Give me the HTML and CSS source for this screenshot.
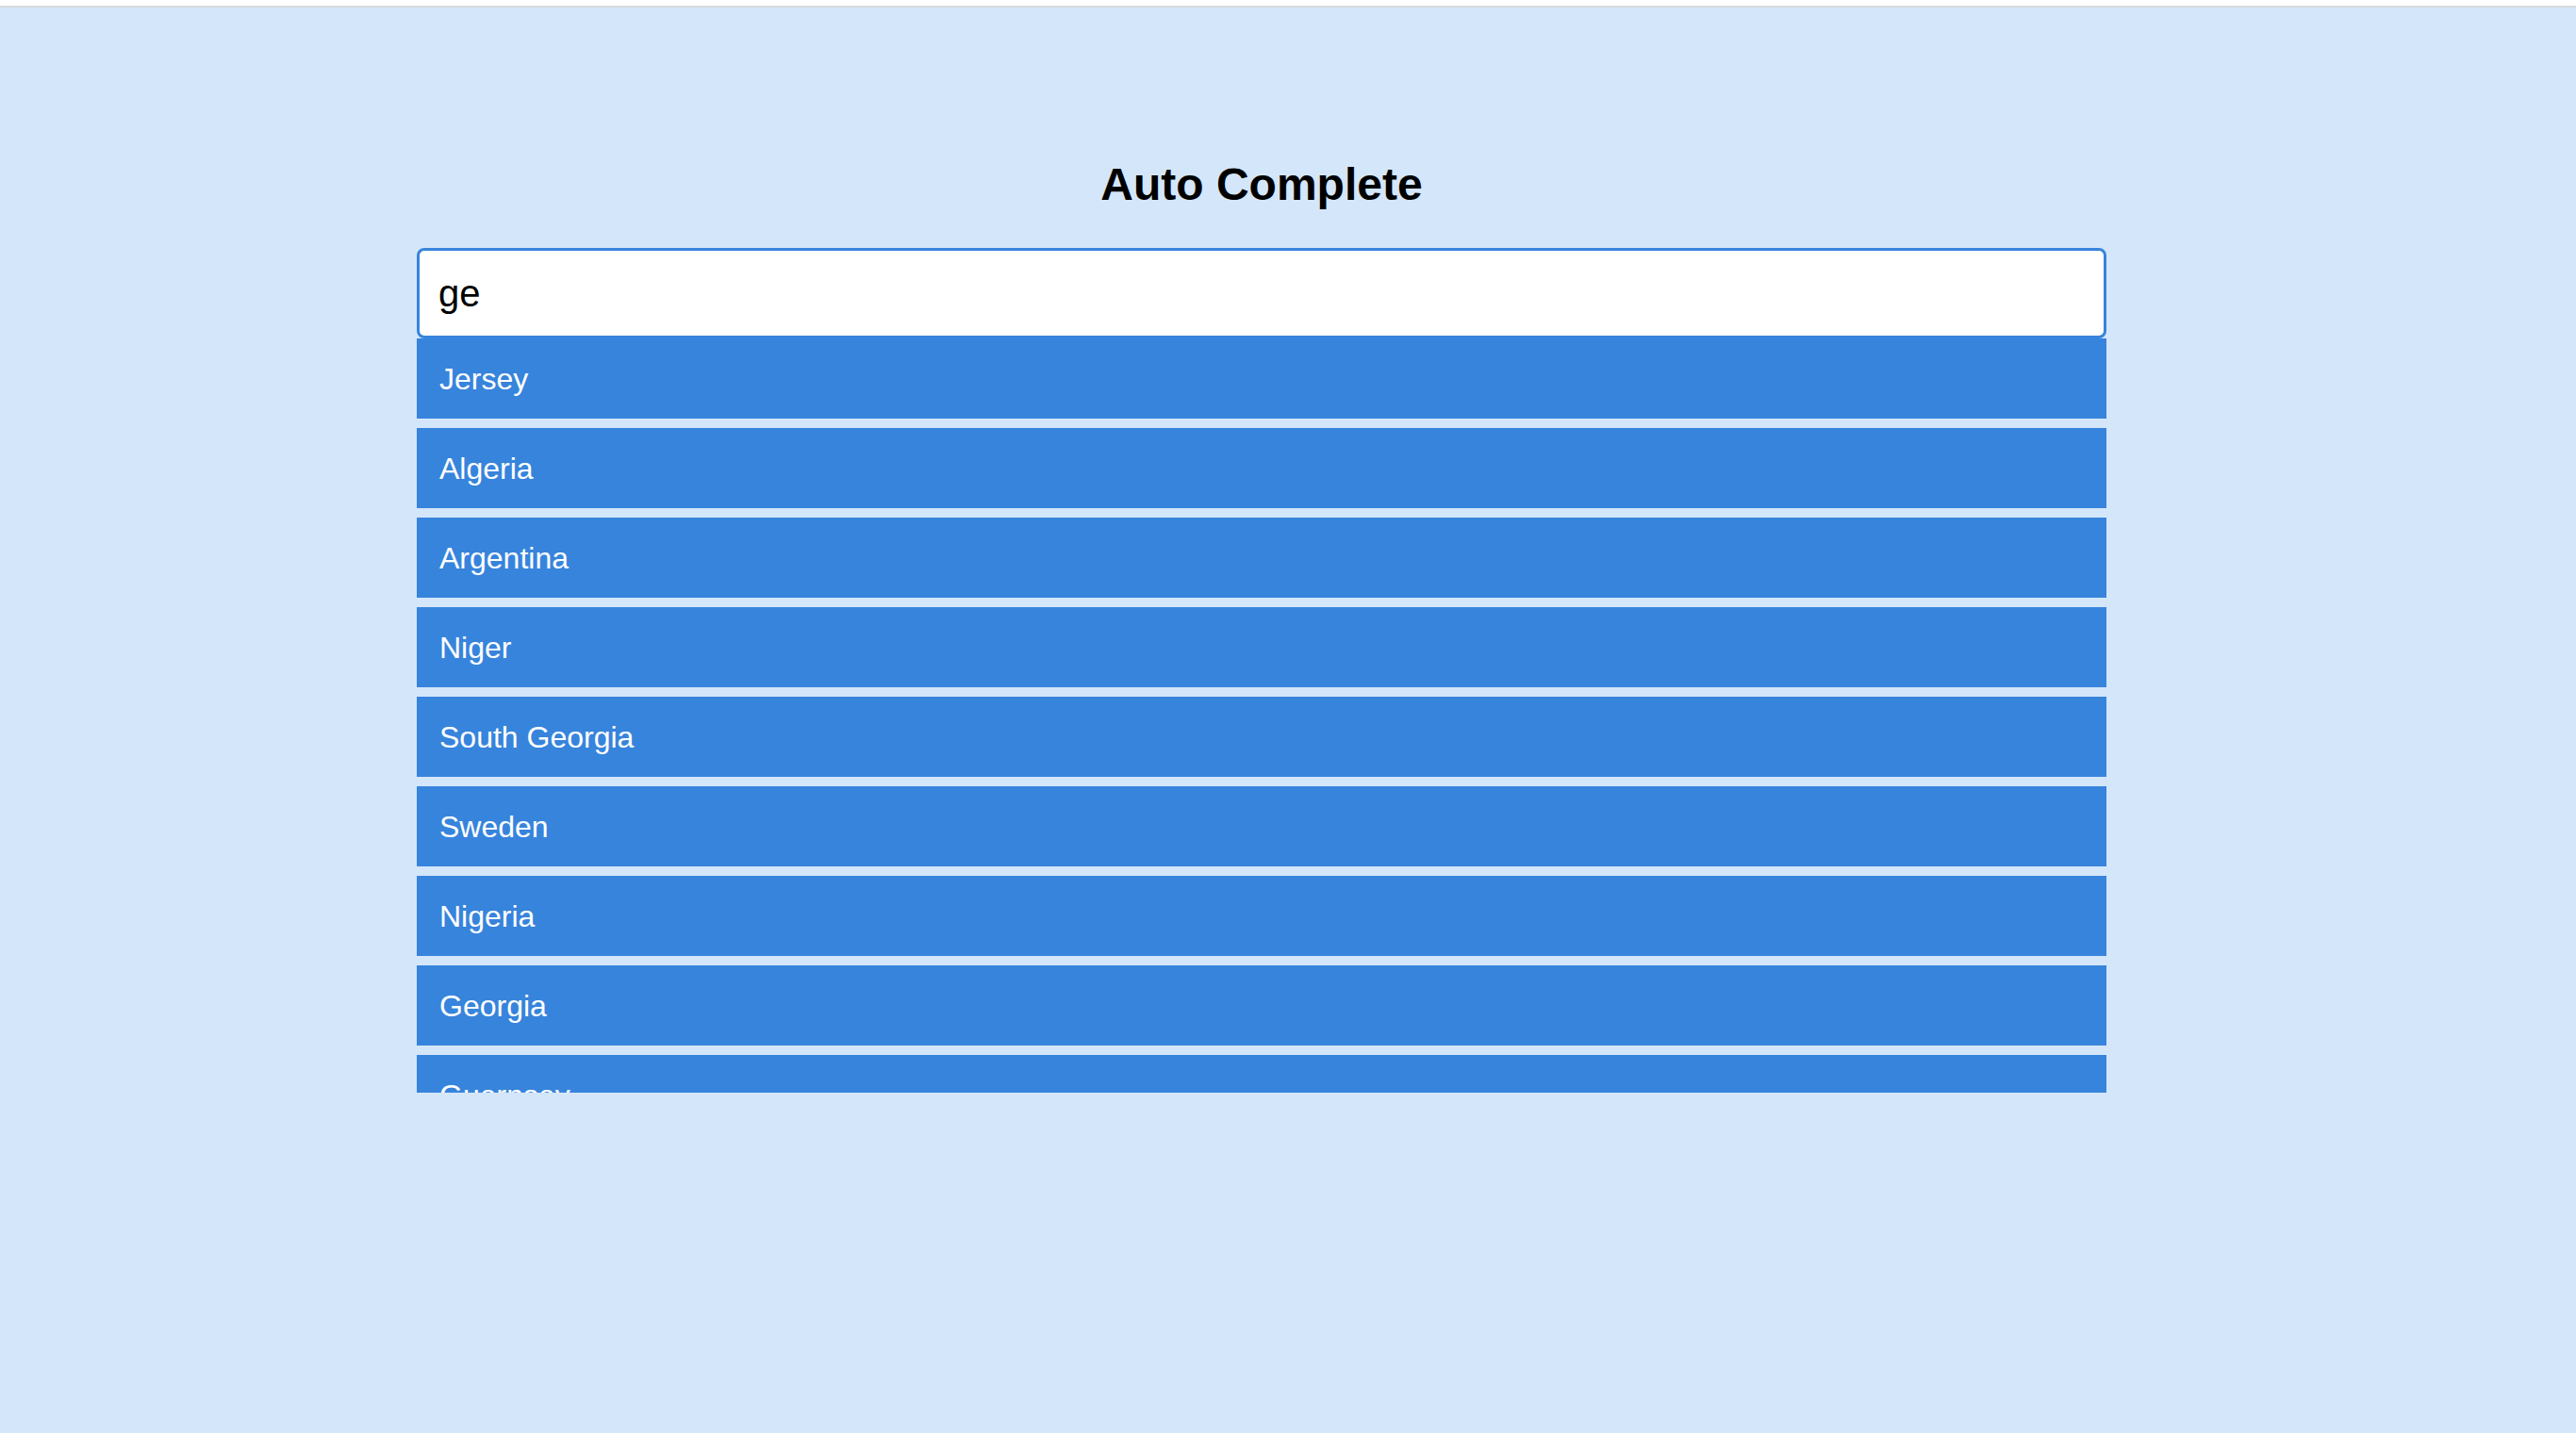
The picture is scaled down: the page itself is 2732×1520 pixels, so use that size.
FILE: index.html
```html
<!DOCTYPE html>
<html lang="en">
<head>
<meta charset="utf-8">
<title>Auto Complete</title>
<link rel="stylesheet" href="styles.css">
</head>
<body>
<div class="topbar"></div>
<main class="app">
  <h1 class="title">Auto Complete</h1>
  <div class="search">
    <input class="search-input" type="text" value="ge">
    <ul class="suggestions">
      <li class="suggestion">Jersey</li>
      <li class="suggestion">Algeria</li>
      <li class="suggestion">Argentina</li>
      <li class="suggestion">Niger</li>
      <li class="suggestion">South Georgia</li>
      <li class="suggestion">Sweden</li>
      <li class="suggestion">Nigeria</li>
      <li class="suggestion">Georgia</li>
      <li class="suggestion">Guernsey</li>
    </ul>
  </div>
</main>
</body>
</html>
```
FILE: styles.css
```css
html, body {
  margin: 0;
  padding: 0;
}
body {
  background: #d4e6fa;
  min-height: 1520px;
  font-family: "Liberation Sans", Arial, Helvetica, sans-serif;
}
.topbar {
  height: 6px;
  background: #ffffff;
  border-bottom: 2px solid #d9d9d9;
}
.app {
  width: 1792px;
  margin: 0 auto;
  position: relative;
  left: -28px;
  padding-top: 160px;
}
.title {
  margin: 0 0 40px;
  text-align: center;
  font-size: 48px;
  line-height: 1.15;
  font-weight: 700;
  color: #000;
}
.search {
  display: flex;
  flex-direction: column;
}
.search-input {
  box-sizing: border-box;
  width: 100%;
  height: 96px;
  border: 3px solid #3784dc;
  border-radius: 8px;
  background: #fff;
  padding: 0 20px;
  font-family: "Liberation Sans", Arial, Helvetica, sans-serif;
  font-size: 40px;
  color: #000;
  outline: none;
  margin: 0;
}
.suggestions {
  list-style: none;
  margin: 0;
  padding: 0;
  max-height: 800px;
  overflow: hidden;
  display: flex;
  flex-direction: column;
  gap: 10px;
}
.suggestion {
  flex: 0 0 85px;
  height: 85px;
  box-sizing: border-box;
  background: #3784dc;
  color: #fff;
  font-size: 32px;
  padding: 2px 24px 0;
  display: flex;
  align-items: center;
}
```
